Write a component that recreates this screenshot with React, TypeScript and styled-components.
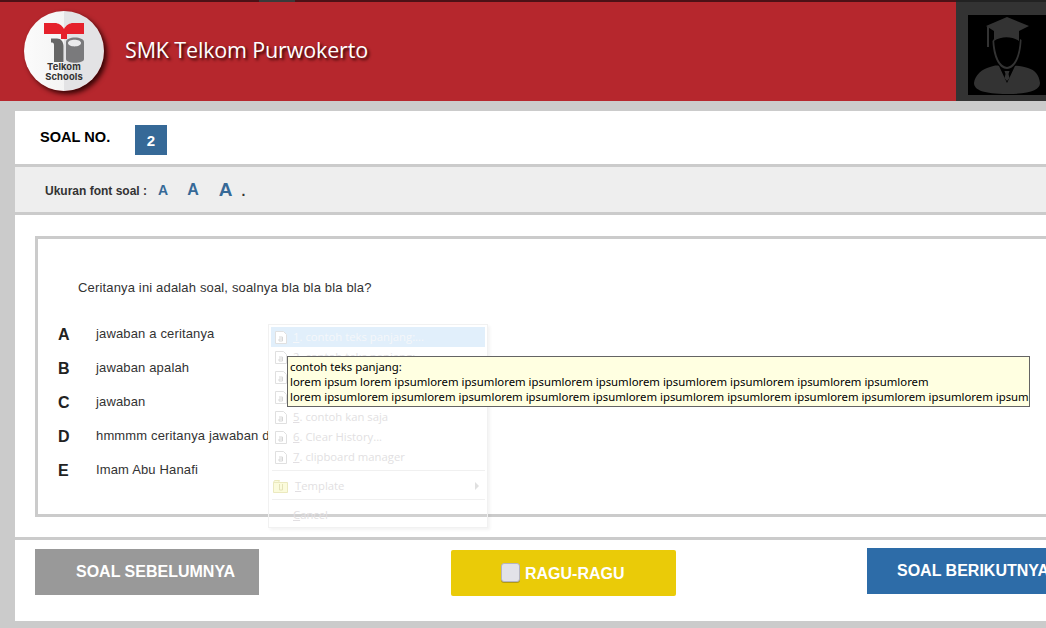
import React from "react";
import styled, { createGlobalStyle } from "styled-components";

const Global = createGlobalStyle`
  html, body { margin: 0; padding: 0; background: #cbcbcb; overflow: hidden; }
  body { font-family: "Liberation Sans", Arial, sans-serif; }
`;
const Page = styled.div`
  position: relative; width: 1046px; height: 628px; overflow: hidden; background: #cbcbcb;
`;
const Header = styled.header`
  height: 99px; display: flex; background: #b6272d; border-top: 2px solid #4c1116;
`;
const TabNotch = styled.div`
  position: absolute; left: 259px; top: 0; width: 36px; height: 2px; background: #3a3a3a;
`;
const Brand = styled.div`
  flex: 1; display: flex; align-items: center; padding-left: 24px;
`;
const Logo = styled.div`
  width: 80px; height: 80px; flex: none; margin-top: -2px; margin-right: 21px; border-radius: 50%;
  box-shadow: 3px 3px 5px rgba(40, 0, 0, .9);
  background: linear-gradient(90deg, #fbfbfb 0, #f4f4f4 50%, #e3e3e5 50%, #e3e3e5 100%);
  display: flex; flex-direction: column; align-items: center;
  svg { margin-top: 12px; display: block; flex: none; }
`;
const LogoLabel = styled.span`
  font: 700 9.4px/10px "Inter", "Liberation Sans", sans-serif; color: #333; text-align: center;
  margin-top: -2px; letter-spacing: .1px;
`;
const SchoolName = styled.h1`
  margin: -4px 0 0; font: 500 21.5px "Open Sans", sans-serif; color: #fff; letter-spacing: -.15px;
  text-shadow: 2px 2px 3px rgba(40, 0, 0, .95);
`;
const UserBlock = styled.div`
  width: 78px; padding: 13px 0 6px 12px; background: #333; flex: none; height: 80px; box-sizing: content-box;
  margin-top: -2px; border-top: 2px solid #222;
`;
const Avatar = styled.div`
  width: 78px; height: 80px; background: #000; overflow: hidden;
`;
const Main = styled.main`
  margin: 10px 0 0 15px; background: #fff; height: 510px; display: flex; flex-direction: column;
`;
const NumberRow = styled.div`
  height: 53px; display: flex; align-items: flex-start; padding: 14px 0 0 25px; box-sizing: border-box;
`;
const NumberLabel = styled.span`
  font-size: 14.6px; font-weight: bold; color: #000; width: 95px; line-height: 25px;
`;
const NumberBadge = styled.span`
  width: 32px; height: 30px; background: #366997; color: #fff; font-weight: bold; font-size: 15px;
  display: flex; align-items: center; justify-content: center; padding-top: 1px; box-sizing: border-box;
`;
const FontBar = styled.div`
  height: 45px; box-sizing: content-box; background: #eee; border-top: 3px solid #cbcbcb; border-bottom: 3px solid #cbcbcb;
  display: flex; align-items: center; padding-left: 30px;
`;
const FontLabel = styled.span`
  font-size: 12px; font-weight: bold; color: #333; margin-right: 11px; position: relative; top: 1px;
`;
const SizeLink = styled.span<{ $size: number; $gap: number }>`
  font-size: ${(p) => p.$size}px; font-weight: bold; color: #366997; margin-right: ${(p) => p.$gap}px; line-height: 1;
`;
const Dot = styled.span`
  font-size: 14px; font-weight: bold; color: #333; position: relative; top: 1px;
`;
const Content = styled.section`
  height: 322px; padding: 21px 0 0 20px; box-sizing: border-box;
`;
const QuestionBox = styled.div`
  height: 281px; border: 3px solid #cbcbcb; border-right: 0; box-sizing: border-box; padding: 40px 0 0 40px;
`;
const Question = styled.p`
  margin: 0 0 29px; font-size: 13px; line-height: 17px; color: #333; letter-spacing: .16px;
`;
const Option = styled.div`
  height: 34px; display: flex; align-items: flex-start; margin-left: -20px;
`;
const OptionKey = styled.span`
  width: 38px; font-size: 16px; font-weight: bold; line-height: 19px; color: #222;
`;
const OptionText = styled.span`
  font-size: 13px; line-height: 17px; color: #333; letter-spacing: .15px;
`;
const Footer = styled.footer`
  flex: 1; border-top: 3px solid #cbcbcb; padding: 9px 0 0 20px; display: flex; align-items: flex-start;
`;
const NavButton = styled.div<{ $bg: string; $w: number; $ml: number; $mt: number; $pl: number }>`
  flex: none; box-sizing: border-box; width: ${(p) => p.$w}px; height: 46px; margin-left: ${(p) => p.$ml}px; margin-top: ${(p) => p.$mt}px;
  padding-left: ${(p) => p.$pl}px; background: ${(p) => p.$bg}; color: #fff; font-weight: bold; font-size: 16px;
  display: flex; align-items: center; white-space: nowrap;
`;
const RaguButton = styled(NavButton)`
  border-radius: 2px; padding-top: 1px;
`;
const FakeCheck = styled.span`
  width: 19px; height: 19px; margin-right: 5px; margin-top: -3px; border-radius: 3px; background: #e2e2e8; border: 1px solid #b4b4c0;
  box-sizing: border-box; box-shadow: 0 1px 0 #b19a12;
`;
const Menu = styled.div`
  position: absolute; left: 268px; top: 324px; width: 220px; height: 204px; box-sizing: border-box;
  padding: 2px; background: rgba(255,255,255,.12); border: 1px solid #f1f1f1; box-shadow: 2px 2px 3px rgba(0,0,0,.05);
  font-family: "Open Sans", sans-serif; color: #e2dfe2;
`;
const MenuItem = styled.div<{ $active?: boolean }>`
  height: 20px; display: flex; align-items: center;
  background: ${(p) => (p.$active ? "#e1effb" : "transparent")}; color: ${(p) => (p.$active ? "#f5f7fa" : "#e2dfe2")};
  padding-left: 4px; font-size: 11.3px; white-space: nowrap;
  u { text-underline-offset: 1px; }
  svg { margin-right: 6px; flex: none; }
`;
const MenuText = styled.span`
  margin-top: -1px;
`;
const MenuSep = styled.div`
  height: 1px; background: #f0f0f0; margin: 3px 0 5px 1px;
`;
const MenuArrow = styled.span`
  margin-left: auto; margin-right: 6px; width: 0; height: 0; border-left: 4px solid #e0e0e0; border-top: 4px solid transparent; border-bottom: 4px solid transparent;
`;
const CancelLabel = styled(MenuText)`
  margin-left: 18px;
`;
const Tip = styled.div`
  position: absolute; left: 287px; top: 356px; width: 743px; height: 51px; box-sizing: border-box;
  padding: 2px 0 0 2px; background: #ffffe1; border: 1px solid #646464; color: #000;
  font: 11.35px/15px "Noto Sans", sans-serif; white-space: pre;
`;

const DocIcon = () => (
  <svg width="12" height="13" viewBox="0 0 12 13">
    <path d="M.5.5h8l3 3v9H.5z" fill="#fff" stroke="#e0e0e0" />
    <path d="M4 6h3.500v4H4V8h3.500" fill="none" stroke="#d6d6d6" />
  </svg>
);
const FolderIcon = () => (
  <svg width="15" height="13" viewBox="0 0 15 13" style={{ marginLeft: -2, marginRight: 7 }}>
    <path d="M.5 2.500h14v10H.5z" fill="#fbfbdc" stroke="#ebe9bf" />
    <path d="M.5 2.500h5l1-2h-5z" fill="#fbfbdc" stroke="#ebe9bf" />
    <path d="M6.500 4v6h3V4" fill="none" stroke="#e4e2b8" />
  </svg>
);

const items = ["contoh teks panjang:...", "contoh teks panjang:", "contoh teks", "contoh teks", "contoh kan saja", "Clear History...", "clipboard manager"];
const options = [["A", "jawaban a ceritanya"], ["B", "jawaban apalah"], ["C", "jawaban"], ["D", "hmmmm ceritanya jawaban d"], ["E", "Imam Abu Hanafi"]];

export default function App() {
  return (
    <Page>
      <Global />
      <Header>
        <Brand>
          <Logo>
            <svg width="42" height="41" viewBox="0 0 42 41">
              <path d="M1 0H12C15 0 19 2 21 6C23 2 27 0 30 0H41V11H24V16H18V11H1z" fill="#e5212b" />
              <path d="M8 15.500H14C18 15.500 20.500 19 20.500 23V39H11V22C11 20 10 19.500 8 19.500z" fill="#666" />
              <path d="M23 19C23 13 41 13 41 19V36C41 41 23 41 23 36z" fill="#7a7a7c" />
              <path d="M25 20C25 15.500 38 15.500 38 20C38 24.500 25 24.500 25 20z" fill="#eaeaec" />
            </svg>
            <LogoLabel>Telkom<br />Schools</LogoLabel>
          </Logo>
          <SchoolName>SMK Telkom Purwokerto</SchoolName>
        </Brand>
        <UserBlock>
          <Avatar>
            <svg width="78" height="80" viewBox="0 0 78 80">
              <path d="M39 2L61 11L51 16V26C44 21 33 21 26 26V16L18 11z" fill="#333" />
              <path d="M19 12h2v20h-2z" fill="#333" />
              <path d="M26 24C27 42 32 51 39 52C46 51 51 42 52 24L53.500 25C53 42 47 54 39 54C31 54 25 42 24.500 26z" fill="#333" />
              <path d="M22 52C25 51 29 50 31 51L39 68L47 51C49 50 56 52 60 53C67 55 71 60 72 68C72 75 62 79 39 79C16 79 6 75 6 68C7 60 14 54 22 52z" fill="#333" />
              <path d="M36.500 56H41.500L40.500 59L41.500 63L39 66L36.500 63L37.500 59z" fill="#333" />
            </svg>
          </Avatar>
        </UserBlock>
      </Header>
      <TabNotch />
      <Main>
        <NumberRow>
          <NumberLabel>SOAL NO.</NumberLabel>
          <NumberBadge>2</NumberBadge>
        </NumberRow>
        <FontBar>
          <FontLabel>Ukuran font soal :</FontLabel>
          <SizeLink $size={14} $gap={19}>A</SizeLink>
          <SizeLink $size={16} $gap={20}>A</SizeLink>
          <SizeLink $size={19} $gap={9}>A</SizeLink>
          <Dot>.</Dot>
        </FontBar>
        <Content>
          <QuestionBox>
            <Question>Ceritanya ini adalah soal, soalnya bla bla bla bla?</Question>
            {options.map(([k, t]) => (
              <Option key={k}>
                <OptionKey>{k}</OptionKey>
                <OptionText>{t}</OptionText>
              </Option>
            ))}
          </QuestionBox>
        </Content>
        <Footer>
          <NavButton $bg="#999" $w={224} $ml={0} $mt={0} $pl={41}>SOAL SEBELUMNYA</NavButton>
          <RaguButton $bg="#eacb08" $w={225} $ml={192} $mt={1} $pl={50}><FakeCheck />RAGU-RAGU</RaguButton>
          <NavButton $bg="#2d6ca8" $w={200} $ml={191} $mt={-1} $pl={30}>SOAL BERIKUTNYA</NavButton>
        </Footer>
      </Main>
      <Menu>
        {items.map((t, i) => (
          <MenuItem key={i} $active={i === 0}>
            <DocIcon /><MenuText><u>{i + 1}</u>. {t}</MenuText>
          </MenuItem>
        ))}
        <MenuSep />
        <MenuItem><FolderIcon /><MenuText><u>T</u>emplate</MenuText><MenuArrow /></MenuItem>
        <MenuSep />
        <MenuItem><CancelLabel><u>C</u>ancel</CancelLabel></MenuItem>
      </Menu>
      <Tip>{"contoh teks panjang:\nlorem ipsum lorem ipsumlorem ipsumlorem ipsumlorem ipsumlorem ipsumlorem ipsumlorem ipsumlorem ipsumlorem\nlorem ipsumlorem ipsumlorem ipsumlorem ipsumlorem ipsumlorem ipsumlorem ipsumlorem ipsumlorem ipsumlorem ipsumlorem ipsum"}</Tip>
    </Page>
  );
}
